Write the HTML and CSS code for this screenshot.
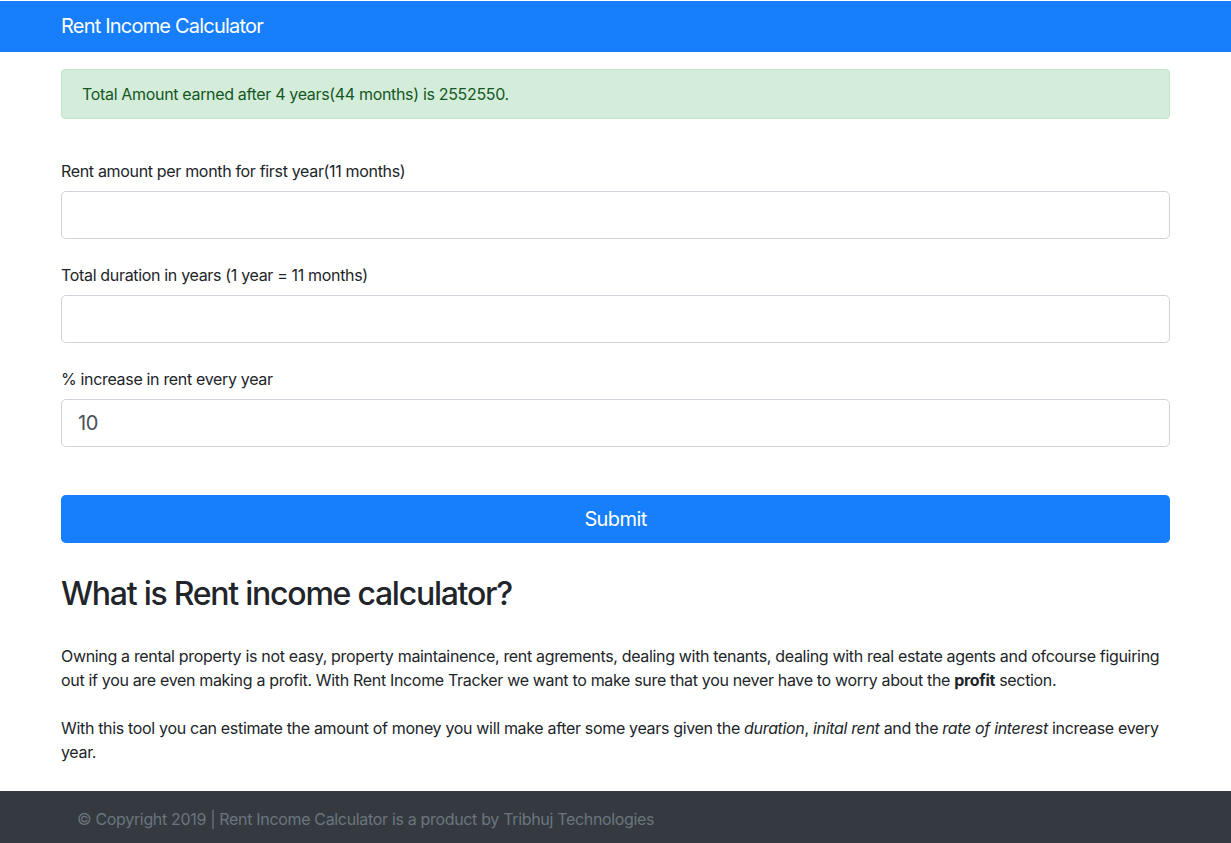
FILE: index.html
```html
<!DOCTYPE html>
<html lang="en">
<head>
<meta charset="utf-8">
<title>Rent Income Calculator</title>
<link rel="stylesheet" href="styles.css">
</head>
<body>
<nav class="navbar">
  <div class="container">
    <span class="brand">Rent Income Calculator</span>
  </div>
</nav>
<main class="container">
  <div class="alert">Total Amount earned after 4 years(44 months) is 2552550.</div>
  <form class="calc-form">
    <div class="form-group">
      <label class="label" for="rent">Rent amount per month for first year(11 months)</label>
      <input class="input" id="rent" type="text">
    </div>
    <div class="form-group">
      <label class="label" for="dur">Total duration in years (1 year = 11 months)</label>
      <input class="input" id="dur" type="text">
    </div>
    <div class="form-group">
      <label class="label" for="inc">% increase in rent every year</label>
      <input class="input" id="inc" type="text" value="10">
    </div>
    <button class="btn" type="button">Submit</button>
  </form>
  <section class="about">
    <h2 class="about-title">What is Rent income calculator?</h2>
    <p class="about-text">Owning a rental property is not easy, property maintainence, rent agrements, dealing with tenants, dealing with real estate agents and ofcourse figuiring out if you are even making a profit. With Rent Income Tracker we want to make sure that you never have to worry about the <b>profit</b> section.</p>
    <p class="about-text">With this tool you can estimate the amount of money you will make after some years given the <i>duration</i>, <i>inital rent</i> and the <i>rate of interest</i> increase every year.</p>
  </section>
</main>
<footer class="footer">
  <div class="container">
    <span class="footer-text">© Copyright 2019 | Rent Income Calculator is a product by Tribhuj Technologies</span>
  </div>
</footer>
</body>
</html>
```
FILE: styles.css
```css
* { box-sizing: border-box; }
html, body { margin: 0; padding: 0; }
body {
  font-family: Inter, "Liberation Sans", Arial, sans-serif;
  font-size: 16px;
  line-height: 24px;
  letter-spacing: -0.33px;
  color: #212529;
  background: #fff;
  padding-top: 1px;
}
.container {
  width: 1139px;
  margin: 0 auto;
  padding: 0 15px;
}
.navbar {
  background: #177ffb;
  height: 51px;
  display: flex;
  align-items: center;
}
.brand {
  color: #fff;
  font-size: 20px;
  line-height: 30px;
  letter-spacing: -0.8px;
  display: block;
  margin-top: -2px;
}
.alert {
  margin-top: 17px;
  background: #d4edda;
  border: 1px solid #c3e6cb;
  color: #155724;
  border-radius: 4px;
  padding: 12px 20px;
}
.calc-form {
  margin-top: 40px;
}
.form-group {
  margin-bottom: 24px;
  display: flex;
  flex-direction: column;
}
.label {
  margin-bottom: 8px;
}
.input {
  width: 100%;
  height: 48px;
  border: 1px solid #ced4da;
  border-radius: 4.8px;
  padding: 8px 16px;
  font-family: inherit;
  font-size: 20px;
  letter-spacing: -0.3px;
  color: #495057;
  outline: none;
}
.btn {
  display: block;
  width: 100%;
  height: 48px;
  margin-top: 48px;
  border: none;
  border-radius: 4.8px;
  background: #177ffb;
  color: #fff;
  font-family: inherit;
  font-size: 20px;
  letter-spacing: -0.6px;
}
.form-group:last-of-type { margin-bottom: 0; }
.about-title {
  margin: 32px 0 0;
  font-size: 32px;
  font-weight: 500;
  line-height: 38px;
  letter-spacing: -1.25px;
}
.about-text {
  margin: 31px 0 0;
}
.about-text + .about-text { margin-top: 24px; }
.footer {
  margin-top: 27px;
  background: #343a40;
  height: 52px;
  padding-top: 4px;
  display: flex;
  align-items: center;
}
.footer-text {
  color: #6c757d;
  padding-left: 16px;
  line-height: 30px;
}
```
